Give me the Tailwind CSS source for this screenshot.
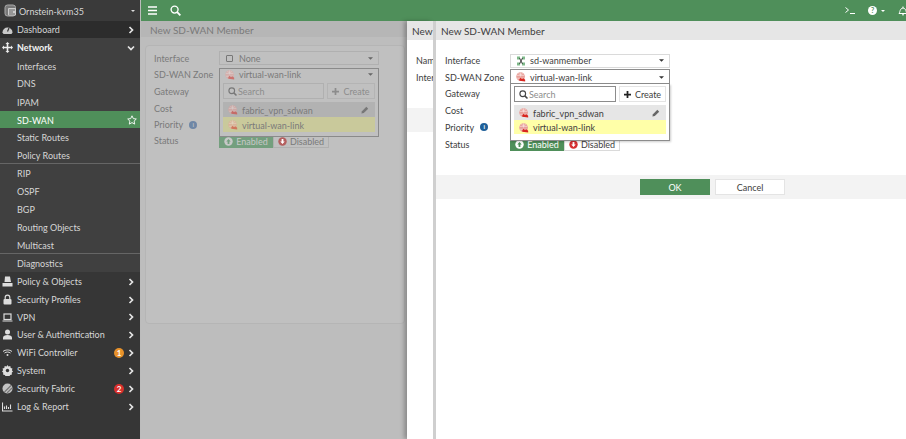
<!DOCTYPE html>
<html><head><meta charset="utf-8">
<script src="https://cdn.jsdelivr.net/npm/@tailwindcss/browser@4"></script>
</head>
<body class="m-0 overflow-hidden">
<svg class="hidden"><defs>
<symbol id="zone" viewBox="0 0 12 12"><circle cx="5.500" cy="5.500" r="5.200" fill="#e8a09a"/><path d="M1 4h9M1.500 7.500h8M3 1.800c2 1.500 3 1.500 5 0M5.500.5v5" stroke="#fbe6e4" stroke-width=".8" fill="none"/><path d="M4 10.500V8.500L5.700 7 7 8.300l2-.8 2 1.700v2.300z" fill="#d8261f"/></symbol>
<symbol id="chev" viewBox="0 0 8 8"><path d="M2.500 1l3 3-3 3" stroke="#e5e5e5" stroke-width="1.700" fill="none"/></symbol>
<symbol id="caret" viewBox="0 0 8 4"><path d="M0 0h8L4 4z" fill="currentColor"/></symbol>
<symbol id="pencil" viewBox="0 0 10 10"><path d="M.5 9.500l.7-3L6.700 1 9 3.300 3.500 8.800z" fill="currentColor"/></symbol>
<symbol id="mag" viewBox="0 0 12 12"><circle cx="5" cy="5" r="3.800" stroke="currentColor" stroke-width="1.500" fill="none"/><path d="M7.800 7.800L11.300 11.300" stroke="currentColor" stroke-width="2"/></symbol>
<symbol id="plus" viewBox="0 0 8 8"><path d="M3 0h2v3h3v2H5v3H3V5H0V3h3z" fill="currentColor"/></symbol>
<symbol id="en" viewBox="0 0 10 10"><circle cx="5" cy="5" r="4.700" fill="currentColor"/><path d="M5 2.300L7.500 5H6v2.800H4V5H2.500z" fill="var(--c)"/></symbol>
<symbol id="dis" viewBox="0 0 10 10"><circle cx="5" cy="5" r="4.700" fill="currentColor"/><path d="M5 7.700L2.500 5H4V2.200h2V5h1.500z" fill="#fff"/></symbol>
</defs></svg>
<div class="flex h-[439px] w-[906px] overflow-hidden text-[9px] leading-none text-[#3d3d3d]" style="font-family:Lato,'Noto Sans',sans-serif">

<!-- sidebar -->
<aside class="flex w-[140px] shrink-0 flex-col whitespace-nowrap bg-[#363636] text-[#d6d6d6]">
  <div class="flex h-[21px] items-center bg-[#3a3a3a] pl-[4px] pr-[4px]">
    <svg class="h-[13px] w-[13px]" viewBox="0 0 13 13"><rect x="1" y="1" width="10.500" height="11" rx="2.500" fill="#777" stroke="#aaa" stroke-width="1"/><rect x="4" y="4" width="8" height="7.500" rx="1" fill="#ccc"/><path d="M5 6h6M5 8h4M5 10h6" stroke="#555" stroke-width=".9"/></svg>
    <span class="ml-[2px] flex-1 pt-px">Ornstein-kvm35</span>
    <svg class="mr-[1px] h-[2px] w-[4px] text-[#ddd]"><use href="#caret"/></svg>
  </div>
  <div class="flex h-[17px] items-center bg-[#2c2c2c] pl-[2px] pr-[5px]">
    <svg class="mr-[4px] h-[10px] w-[11px]" viewBox="0 0 11 10"><path d="M.5 7.500a5 5 0 1 1 10 0l-1 1.500h-8z" fill="#c8c8c8"/><path d="M5.500 6.500L7 3" stroke="#333" stroke-width="1.200"/></svg>
    <span class="flex-1">Dashboard</span><svg class="h-[8px] w-[8px]"><use href="#chev"/></svg>
  </div>
  <div class="flex flex-col bg-[#404040]">
    <div class="flex h-[18px] items-center pl-[2px] pr-[5px] pt-px font-bold text-[#f4f4f4]">
      <svg class="mr-[4px] h-[11px] w-[11px]" viewBox="0 0 11 11"><path d="M5.500 0l2 2H6.300v2.700H9V3.500l2 2-2 2V6.300H6.300V9H7.500l-2 2-2-2h1.200V6.300H2v1.200l-2-2 2-2v1.200h2.700V2H3.500z" fill="#eee"/></svg>
      <span class="flex-1">Network</span><svg class="h-[8px] w-[8px] rotate-90"><use href="#chev"/></svg>
    </div>
    <div class="flex h-[18px] items-center pl-[17px] pt-[2px]">Interfaces</div>
    <div class="flex h-[18px] items-center pl-[17px] pt-px">DNS</div>
    <div class="flex h-[19px] items-center pl-[17px] pt-px">IPAM</div>
    <div class="flex h-[17px] items-center bg-[#4f8f5a] pl-[17px] pr-[3px] pt-px text-white">
      <span class="flex-1">SD-WAN</span>
      <svg class="h-[10px] w-[10px]" viewBox="0 0 10 10"><path d="M5 .8l1.300 2.800 3 .4-2.200 2.100.6 3L5 7.600 2.300 9.100l.6-3L.7 4l3-.4z" fill="none" stroke="#fff" stroke-width=".9"/></svg>
    </div>
    <div class="flex h-[18px] items-center pl-[17px] pt-px">Static Routes</div>
    <div class="flex h-[18px] items-center border-b border-[#666] pl-[17px] pt-px">Policy Routes</div>
    <div class="flex h-[18px] items-center pl-[17px] pt-px">RIP</div>
    <div class="flex h-[18px] items-center pl-[17px] pt-px">OSPF</div>
    <div class="flex h-[18px] items-center pl-[17px] pt-px">BGP</div>
    <div class="flex h-[18px] items-center pl-[17px] pt-px">Routing Objects</div>
    <div class="flex h-[18px] items-center border-b border-[#666] pl-[17px] pt-px">Multicast</div>
    <div class="flex h-[18px] items-center pl-[17px] pt-px">Diagnostics</div>
  </div>
  <div class="flex h-[18px] items-center pl-[2px] pr-[5px] pt-px">
    <svg class="mr-[4px] h-[11px] w-[11px]" viewBox="0 0 11 11"><path d="M3 .5h5l1 5.500H2.500zM.5 7h10v3.500H.5z" fill="#ddd"/></svg>
    <span class="flex-1">Policy &amp; Objects</span><svg class="h-[8px] w-[8px]"><use href="#chev"/></svg></div>
  <div class="flex h-[18px] items-center pl-[2px] pr-[5px] pt-px">
    <svg class="mr-[4px] h-[11px] w-[11px]" viewBox="0 0 11 11"><path d="M3.200 5V3.500a2.300 2.300 0 0 1 4.600 0V5" stroke="#ddd" fill="none" stroke-width="1.200"/><rect x="1.500" y="5" width="8" height="5.500" rx="1" fill="#ddd"/></svg>
    <span class="flex-1">Security Profiles</span><svg class="h-[8px] w-[8px]"><use href="#chev"/></svg></div>
  <div class="flex h-[17px] items-center pl-[2px] pr-[5px] pt-px">
    <svg class="mr-[4px] h-[11px] w-[11px]" viewBox="0 0 11 11"><rect x="2" y="2" width="7" height="5.500" fill="none" stroke="#ddd" stroke-width="1.200"/><path d="M.5 8.500h10v1h-10z" fill="#ddd"/></svg>
    <span class="flex-1">VPN</span><svg class="h-[8px] w-[8px]"><use href="#chev"/></svg></div>
  <div class="flex h-[18px] items-center pl-[2px] pr-[5px] pt-px">
    <svg class="mr-[4px] h-[11px] w-[11px]" viewBox="0 0 11 11"><circle cx="5.500" cy="3" r="2.500" fill="#ddd"/><path d="M1 10.500V8.500C1 7 3 6 5.500 6S10 7 10 8.500v2z" fill="#ddd"/></svg>
    <span class="flex-1">User &amp; Authentication</span><svg class="h-[8px] w-[8px]"><use href="#chev"/></svg></div>
  <div class="flex h-[18px] items-center pl-[2px] pr-[5px] pt-px">
    <svg class="mr-[4px] h-[11px] w-[11px]" viewBox="0 0 11 11"><path d="M1 4.500c2.500-2 6.500-2 9 0M2.500 6c1.700-1.300 4.300-1.300 6 0" stroke="#ddd" fill="none"/><circle cx="5.500" cy="8" r="1" fill="#ddd"/></svg>
    <span class="flex-1">WiFi Controller</span>
    <span class="mr-[3px] flex h-[10px] w-[10px] items-center justify-center rounded-full bg-[#e8922b] text-[8px] font-bold text-white">1</span>
    <svg class="h-[8px] w-[8px]"><use href="#chev"/></svg></div>
  <div class="flex h-[18px] items-center pl-[2px] pr-[5px] pt-px">
    <svg class="mr-[4px] h-[11px] w-[11px]" viewBox="0 0 11 11"><path d="M5.500 0l1 1.500 1.800-.4.400 1.800 1.800.6-.6 1.800 1.100 1.200-1.300 1.300.3 1.800-1.800.3-.9 1.600-1.800-.6-1.800.6-.9-1.600-1.800-.3.300-1.800L0 6.500l1.100-1.200L.5 3.500l1.800-.6.400-1.800 1.800.4z" fill="#ddd"/><circle cx="5.500" cy="5.500" r="1.700" fill="#363636"/></svg>
    <span class="flex-1">System</span><svg class="h-[8px] w-[8px]"><use href="#chev"/></svg></div>
  <div class="flex h-[18px] items-center pl-[2px] pr-[5px] pt-px">
    <svg class="mr-[4px] h-[11px] w-[11px]" viewBox="0 0 11 11"><circle cx="5.500" cy="5.500" r="5" fill="#c4c4c4"/><path d="M2.500 9L9 2.500M5 10l5-5" stroke="#777" stroke-width="1.200"/></svg>
    <span class="flex-1">Security Fabric</span>
    <span class="mr-[3px] flex h-[10px] w-[10px] items-center justify-center rounded-full bg-[#d9302c] text-[8px] font-bold text-white">2</span>
    <svg class="h-[8px] w-[8px]"><use href="#chev"/></svg></div>
  <div class="flex h-[18px] items-center pl-[2px] pr-[5px] pt-px">
    <svg class="mr-[4px] h-[11px] w-[11px]" viewBox="0 0 11 11"><path d="M.5 1.500v8.500h10M2.500 8V5.500M4.500 8V4.500M6.500 8V6M8.500 8V3.500" stroke="#ddd" fill="none" stroke-width="1.100"/></svg>
    <span class="flex-1">Log &amp; Report</span><svg class="h-[8px] w-[8px]"><use href="#chev"/></svg></div>
</aside>

<div class="w-px shrink-0 bg-[#bcbcbc]"></div>

<div class="flex min-w-0 flex-1 flex-col">
  <!-- top bar -->
  <header class="flex h-[21px] shrink-0 items-center overflow-hidden bg-[#4f8f5a] pl-[7px] text-white">
    <svg class="h-[9px] w-[9px] shrink-0" viewBox="0 0 9 9"><path d="M0 1h9M0 4.500h9M0 8h9" stroke="#fff" stroke-width="1.500"/></svg>
    <svg class="ml-[13px] h-[11px] w-[11px] shrink-0"><use href="#mag"/></svg>
    <div class="flex-1"></div>
    <svg class="h-[7px] w-[10px] shrink-0" viewBox="0 0 10 7"><path d="M.5.5L3.500 3 .5 5.500" stroke="#fff" fill="none"/><path d="M5 6.500h5" stroke="#fff"/></svg>
    <span class="ml-[13px] flex h-[9px] w-[9px] shrink-0 items-center justify-center rounded-full bg-white text-[7px] font-bold text-[#4f8f5a]">?</span>
    <svg class="ml-[4px] h-[2px] w-[4px] shrink-0 text-white"><use href="#caret"/></svg>
    <svg class="ml-[13px] mr-[-2px] h-[10px] w-[10px] shrink-0" viewBox="0 0 10 10"><path d="M1 7.500c1.200-1 .5-5 4-5.500 3.500.5 2.800 4.500 4 5.500zM4 8.800h2M5 .5v1.500" stroke="#fff" fill="none"/></svg>
  </header>

  <div class="flex min-h-0 flex-1 whitespace-nowrap">
    <!-- background panel -->
    <section class="relative w-[266px] shrink-0 bg-[#bdbdbd] text-[#7a7a7a]">
      <div class="flex h-[16px] items-center bg-[#b6b6b6] pl-[9px] pt-px text-[10px]">New SD-WAN Member</div>
      <div class="ml-[4px] mr-[2px] mt-[8px] h-[279px] rounded-sm border border-[#b5b5b5] bg-[#c0c0c0] pl-[8px] pt-[3px]">
        <div class="flex h-[17px] items-center"><span class="w-[65px] pt-px">Interface</span>
          <div class="flex h-[14px] w-[160px] items-center border border-[#b0b0b0] pl-[6px] pr-[5px] pt-px">
            <span class="h-[7px] w-[7px] rounded-[1px] border border-[#777]"></span><span class="ml-[6px] flex-1">None</span><svg class="h-[3px] w-[5px] text-[#666]"><use href="#caret"/></svg></div></div>
        <div class="flex h-[17px] items-center"><span class="w-[65px]">SD-WAN Zone</span>
          <div class="flex h-[14px] w-[160px] items-center border border-[#8a8a8a] pl-[5px] pr-[5px]">
            <svg class="h-[10px] w-[10px] opacity-50"><use href="#zone"/></svg><span class="ml-[4px] flex-1">virtual-wan-link</span><svg class="h-[3px] w-[5px] text-[#666]"><use href="#caret"/></svg></div></div>
        <div class="flex h-[16px] items-center pt-px">Gateway</div>
        <div class="flex h-[17px] items-center pt-px">Cost</div>
        <div class="flex h-[16px] items-center pt-px">Priority<span class="ml-[6px] flex h-[8px] w-[8px] items-center justify-center rounded-full bg-[#6f87a6] text-[6px] font-bold text-[#c0c0c0]">i</span></div>
        <div class="flex h-[17px] items-center"><span class="w-[65px]">Status</span>
          <div class="flex h-[14px]">
            <span class="flex w-[54px] items-center justify-center bg-[#749f7e] pt-px text-[#c8c8c8]"><svg class="mr-[3px] h-[9px] w-[9px]" style="--c:#749f7e"><use href="#en"/></svg>Enabled</span>
            <span class="flex w-[56px] items-center justify-center border border-[#b0b0b0] pt-px"><svg class="mr-[3px] h-[9px] w-[9px] text-[#b45f5f]"><use href="#dis"/></svg>Disabled</span>
          </div></div>
      </div>
      <!-- dropdown over content -->
      <div class="absolute left-[78px] top-[60px] h-[56px] w-[160px] border border-t-0 border-[#8a8a8a] bg-[#c0c0c0]">
        <div class="flex gap-[3px] px-[3px] pt-[2px]">
          <div class="flex h-[16px] w-[101px] items-center border border-[#b0b0b0] pl-[4px] pt-px text-[#8c8c8c]"><svg class="h-[9px] w-[9px] text-[#777]"><use href="#mag"/></svg><span class="ml-[1px]">Search</span></div>
          <div class="flex h-[16px] flex-1 items-center justify-center border border-[#b4b4b4] pt-px text-[#8c8c8c]"><svg class="mr-[4px] h-[7px] w-[7px]"><use href="#plus"/></svg>Create</div>
        </div>
        <div class="mt-[3px] px-[3px]">
          <div class="flex h-[15px] items-center bg-[#b2b2b2] pl-[5px] pr-[6px] pt-px"><svg class="h-[10px] w-[10px] opacity-50"><use href="#zone"/></svg><span class="ml-[4px] flex-1">fabric_vpn_sdwan</span><svg class="h-[8px] w-[8px] text-[#777]"><use href="#pencil"/></svg></div>
          <div class="flex h-[15px] items-center bg-[#c9c99b] pl-[5px] pt-px"><svg class="h-[10px] w-[10px] opacity-50"><use href="#zone"/></svg><span class="ml-[4px]">virtual-wan-link</span></div>
        </div>
      </div>
    </section>

    <!-- middle panel -->
    <section class="relative z-10 w-[26px] shrink-0 overflow-hidden bg-white shadow-[-3px_0_4px_rgba(0,0,0,0.25)]">
      <div class="flex h-[19px] items-center bg-[#e6e6e6] pl-[5px] text-[10px]">New SD-WAN Member</div>
      <div class="mt-[12px] flex h-[17px] items-center pl-[9px]">Name</div>
      <div class="flex h-[17px] items-center pl-[9px]">Interface</div>
      <div class="mt-[22px] h-[24px] bg-[#f3f3f3]"></div>
    </section>
    <div class="z-10 w-[3px] shrink-0 bg-[#cfcfcf]"></div>

    <!-- front panel -->
    <section class="relative z-10 flex min-w-0 flex-1 flex-col bg-white">
      <div class="flex h-[19px] shrink-0 items-center bg-[#e6e6e6] pl-[5px] text-[10px]">New SD-WAN Member</div>
      <div class="h-[135px] shrink-0 pl-[9px] pt-[12px]">
        <div class="flex h-[17px] items-center"><span class="w-[65px] shrink-0">Interface</span>
          <div class="flex h-[14px] w-[160px] items-center border border-[#dadada] pl-[5px] pr-[5px]">
            <svg class="h-[10px] w-[10px]" viewBox="0 0 10 10"><path d="M1 .5h3v3H1zM6 .5h3v3H6zM1 6.500h3v3H1zM6 6.500h3v3H6z" fill="#7fb98a"/><path d="M3.500 2L6.500 8M6.500 2L3.500 8" stroke="#333" stroke-width=".9"/></svg>
            <span class="ml-[4px] flex-1">sd-wanmember</span><svg class="h-[3px] w-[5px] text-[#333]"><use href="#caret"/></svg></div></div>
        <div class="flex h-[15px] items-center"><span class="w-[65px] shrink-0 pt-px">SD-WAN Zone</span>
          <div class="flex h-[15px] w-[160px] items-center border border-[#8c8c8c] pl-[5px] pr-[5px] pt-px">
            <svg class="h-[10px] w-[10px]"><use href="#zone"/></svg><span class="ml-[4px] flex-1">virtual-wan-link</span><svg class="h-[3px] w-[5px] text-[#333]"><use href="#caret"/></svg></div></div>
        <div class="flex h-[17px] items-center pt-px">Gateway</div>
        <div class="flex h-[17px] items-center pt-px">Cost</div>
        <div class="flex h-[17px] items-center pt-px">Priority<span class="ml-[6px] flex h-[8px] w-[8px] items-center justify-center rounded-full bg-[#1f5f99] text-[6px] font-bold text-white">i</span></div>
        <div class="flex h-[18px] items-center"><span class="w-[65px] shrink-0">Status</span>
          <div class="flex h-[14px]">
            <span class="flex w-[54px] items-center justify-center bg-[#4f8f5a] pt-px text-white"><svg class="mr-[3px] h-[9px] w-[9px]" style="--c:#4f8f5a"><use href="#en"/></svg>Enabled</span>
            <span class="flex w-[56px] items-center justify-center border border-[#dadada] pt-px"><svg class="mr-[3px] h-[9px] w-[9px] text-[#d63031]"><use href="#dis"/></svg>Disabled</span>
          </div></div>
      </div>
      <div class="flex h-[24px] shrink-0 items-center justify-end bg-[#f3f3f3] pr-[121px]">
        <span class="flex h-[16px] w-[70px] items-center justify-center bg-[#4f8f5a] pt-px text-white">OK</span>
        <span class="ml-[5px] flex h-[16px] w-[70px] items-center justify-center border border-[#e4e4e4] bg-white pt-px">Cancel</span>
      </div>
      <div class="flex-1"></div>

      <div class="absolute left-[74px] top-[63px] h-[57px] w-[160px] border border-t-0 border-[#8c8c8c] bg-white shadow-[1px_1px_2px_rgba(0,0,0,0.2)]">
        <div class="flex gap-[3px] px-[3px] pt-[2px]">
          <div class="flex h-[16px] w-[102px] items-center border border-[#8c8c8c] pl-[4px] pt-px text-[#8c8c8c]"><svg class="h-[9px] w-[9px] text-[#444]"><use href="#mag"/></svg><span class="ml-[1px]">Search</span></div>
          <div class="flex h-[16px] flex-1 items-center justify-center border border-[#e4e4e4] pt-px"><svg class="mr-[4px] h-[7px] w-[7px] text-[#222]"><use href="#plus"/></svg>Create</div>
        </div>
        <div class="mt-[3px] px-[3px]">
          <div class="flex h-[15px] items-center bg-[#e6e6e6] pl-[5px] pr-[6px] pt-px"><svg class="h-[10px] w-[10px]"><use href="#zone"/></svg><span class="ml-[4px] flex-1">fabric_vpn_sdwan</span><svg class="h-[8px] w-[8px] text-[#666]"><use href="#pencil"/></svg></div>
          <div class="flex h-[14px] items-center bg-[#ffffa8] pl-[5px] pt-px"><svg class="h-[10px] w-[10px]"><use href="#zone"/></svg><span class="ml-[4px]">virtual-wan-link</span></div>
        </div>
      </div>
    </section>
  </div>
</div>
</div>
</body></html>
